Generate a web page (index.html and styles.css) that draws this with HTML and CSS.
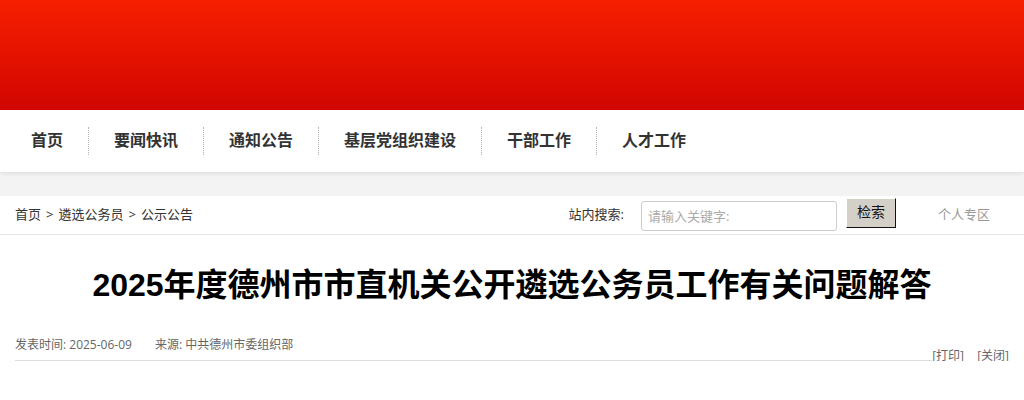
FILE: index.html
```html
<!DOCTYPE html>
<html lang="zh-CN">
<head>
    <meta charset="UTF-8">
    <title>2025年度德州市市直机关公开遴选公务员工作有关问题解答</title>
    <link rel="stylesheet" href="styles.css">
</head>
<body>
    <header class="banner"></header>
    <nav class="main-nav">
        <ul>
            <li><a href="#">首页</a></li>
            <li><a href="#">要闻快讯</a></li>
            <li><a href="#">通知公告</a></li>
            <li><a href="#">基层党组织建设</a></li>
            <li><a href="#">干部工作</a></li>
            <li><a href="#">人才工作</a></li>
        </ul>
    </nav>
    <div class="gap-band"></div>
    <div class="toolbar">
        <div class="crumbs">
            <a href="#">首页</a><span class="sep">&gt;</span><a href="#">遴选公务员</a><span class="sep">&gt;</span><a href="#">公示公告</a>
        </div>
        <form class="search">
            <label for="kw">站内搜索:</label>
            <input type="text" id="kw" placeholder="请输入关键字:">
            <button type="button">检索</button>
        </form>
        <a class="personal" href="#">个人专区</a>
    </div>
    <main class="article">
        <h1>2025年度德州市市直机关公开遴选公务员工作有关问题解答</h1>
        <div class="meta-row">
            <div class="meta">
                <span class="date">发表时间: 2025-06-09</span>
                <span>来源: 中共德州市委组织部</span>
            </div>
            <div class="tools">
                <a href="#">[打印]</a>
                <a href="#">[关闭]</a>
            </div>
        </div>
    </main>
</body>
</html>
```

FILE: styles.css
```css
/* Basic styles */
body {
    margin: 0;
    font-family: "Liberation Sans", "Noto Sans CJK SC", sans-serif;
    color: #333;
    background-color: #fff;
}
a {
    color: inherit;
    text-decoration: none;
}

/* Top banner */
.banner {
    height: 110px;
    background: linear-gradient(#f71f00, #d10600);
}

/* Main nav */
.main-nav {
    position: relative;
    height: 62px;
    background-color: #fff;
    box-shadow: 0 2px 4px rgba(0, 0, 0, 0.08);
}
.main-nav ul {
    display: flex;
    align-items: center;
    height: 100%;
    margin: 0;
    padding: 0 0 0 6px;
    list-style: none;
}
.main-nav li {
    padding: 0 25px;
    line-height: 28px;
    font-size: 16px;
    font-weight: bold;
    color: #333;
    border-right: 1px dotted #b5b5b5;
}
.main-nav li:last-child {
    border-right: none;
}

.gap-band {
    height: 24px;
    background-color: #f3f3f3;
}

/* Breadcrumb + search */
.toolbar {
    display: flex;
    align-items: center;
    box-sizing: border-box;
    height: 39px;
    padding: 0 0 3px 15px;
    border-bottom: 1px solid #e6e6e6;
    font-family: "Open Sans", "Noto Sans CJK SC", sans-serif;
    font-size: 13px;
}
.crumbs {
    flex: 1;
    color: #333;
}
.crumbs .sep {
    margin: 0 5px;
}
.search {
    display: flex;
    align-items: center;
    margin: 0;
}
.search label {
    margin-right: 17px;
    color: #333;
}
.search input {
    box-sizing: border-box;
    width: 196px;
    height: 30px;
    margin-top: 5px;
    padding: 0 6px;
    border: 1px solid #ccc;
    border-radius: 3px;
    font-family: inherit;
    font-size: 13px;
    color: #333;
}
.search input::placeholder {
    color: #aaa;
}
.search button {
    box-sizing: border-box;
    width: 50px;
    height: 30px;
    margin: -1px 0 0 9px;
    padding: 0 0 4px;
    background-color: #d4d0c8;
    border: 1px solid;
    border-color: #fff #111 #111 #fff;
    font-family: "Noto Sans CJK SC", sans-serif;
    font-size: 14px;
    color: #111;
}
.personal {
    margin: 0 34px 0 42px;
    color: #999;
}

/* Article head */
.article {
    padding: 0 15px;
}
.article h1 {
    margin: 30px 0 0;
    font-size: 32px;
    line-height: 40px;
    text-align: center;
    color: #000;
}
.meta-row {
    display: flex;
    align-items: flex-end;
    margin-top: 30px;
    font-family: "Open Sans", "Noto Sans CJK SC", sans-serif;
    font-size: 12px;
    color: #666;
}
.meta {
    flex: 1;
    line-height: 20px;
    padding-bottom: 5px;
    border-bottom: 1px solid #ddd;
}
.meta .date {
    margin-right: 20px;
}
.tools {
    line-height: 20px;
    margin-bottom: -5px;
}
.tools a + a {
    margin-left: 10px;
}
```
